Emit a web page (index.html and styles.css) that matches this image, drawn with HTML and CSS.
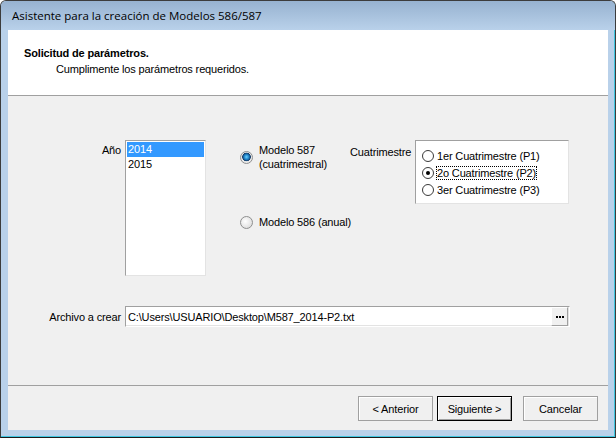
FILE: index.html
```html
<!DOCTYPE html>
<html lang="es">
<head>
    <meta charset="UTF-8">
    <title>Asistente para la creación de Modelos 586/587</title>
    <link rel="stylesheet" href="styles.css">
</head>
<body>

<div class="window">
    <div class="titlebar">Asistente para la creación de Modelos 586/587</div>

    <div class="frame">
        <div class="client">

            <div class="header">
                <div class="header-title">Solicitud de parámetros.</div>
                <div class="header-sub">Cumplimente los parámetros requeridos.</div>
            </div>

            <div class="content">
                <div class="params">
                    <div class="field-label year-label">Año</div>
                    <div class="listbox">
                        <div class="list-item selected">2014</div>
                        <div class="list-item">2015</div>
                    </div>

                    <div class="models">
                        <div class="aero-radio checked-row">
                            <span class="aero-dot checked"></span>
                            <span>Modelo 587<br>(cuatrimestral)</span>
                        </div>
                        <div class="aero-radio second">
                            <span class="aero-dot"></span>
                            <span>Modelo 586 (anual)</span>
                        </div>
                    </div>

                    <div class="period-label">Cuatrimestre</div>
                    <div class="groupbox">
                        <div class="classic-radio">
                            <span class="dot"></span>
                            <span>1er Cuatrimestre (P1)</span>
                        </div>
                        <div class="classic-radio">
                            <span class="dot checked"></span>
                            <span class="focused">2o Cuatrimestre (P2)</span>
                        </div>
                        <div class="classic-radio">
                            <span class="dot"></span>
                            <span>3er Cuatrimestre (P3)</span>
                        </div>
                    </div>
                </div>

                <div class="file-row">
                    <div class="field-label">Archivo a crear</div>
                    <div class="textbox">
                        <span class="path">C:\Users\USUARIO\Desktop\M587_2014-P2.txt</span>
                        <span class="browse"><i></i><i></i><i></i></span>
                    </div>
                </div>
            </div>

            <div class="footer">
                <button class="btn">&lt; Anterior</button>
                <button class="btn default">Siguiente &gt;</button>
                <button class="btn cancel">Cancelar</button>
            </div>

        </div>
    </div>
</div>

</body>
</html>
```

FILE: styles.css
```css
html, body {
    margin: 0;
    padding: 0;
    background: #ffffff;
}

body {
    font-family: "Liberation Sans", Arial, sans-serif;
    font-size: 11px;
    letter-spacing: -0.15px;
    color: #000;
}

.window {
    width: 616px;
    height: 438px;
    box-sizing: border-box;
    border: 1px solid #3c3c3c;
    border-bottom-color: #1a1a1a;
    border-radius: 6px 6px 0 0;
    background: #b9d1ea;
    display: flex;
    flex-direction: column;
    overflow: hidden;
    box-shadow: inset -1px -1px 0 #3fc6e0;
}

.titlebar {
    height: 29px;
    padding-left: 11px;
    line-height: 29px;
    font-family: "Open Sans", "Liberation Sans", sans-serif;
    font-size: 11.5px;
    letter-spacing: 0;
    color: #000;
    background: linear-gradient(#97b2d0, #b9d1ea);
    flex: none;
}

.frame {
    flex: 1;
    display: flex;
    padding: 0 7px 7px 7px;
}

.client {
    flex: 1;
    background: #f0f0f0;
    display: flex;
    flex-direction: column;
}

/* cabecera blanca */
.header {
    height: 66px;
    box-sizing: border-box;
    background: #fff;
    border-bottom: 1px solid #a0a0a0;
    padding: 15px 0 0 16px;
    line-height: 16px;
}

.header-title {
    font-weight: bold;
}

.header-sub {
    margin-left: 32px;
}

.content {
    flex: 1;
    padding-top: 44px;
}

.params {
    display: flex;
    align-items: flex-start;
}

.field-label {
    width: 117px;
    box-sizing: border-box;
    padding-right: 4px;
    text-align: right;
    flex: none;
}

.year-label {
    margin-top: 3px;
    line-height: 14px;
}

.listbox {
    width: 81px;
    height: 136px;
    box-sizing: border-box;
    background: #fff;
    border: 1px solid;
    border-color: #a0a0a0 #e3e3e3 #e3e3e3 #a0a0a0;
    padding: 1px;
    flex: none;
}

.list-item {
    height: 15px;
    line-height: 15px;
    padding-left: 1px;
}

.list-item.selected {
    background: #3399ff;
    color: #fff;
}

/* radios estilo Aero */
.models {
    width: 110px;
    margin-left: 34px;
    flex: none;
}

.aero-radio {
    display: flex;
    align-items: center;
    line-height: 14px;
    white-space: nowrap;
}

.aero-radio.checked-row {
    margin-top: 3px;
}

.aero-radio.second {
    margin-top: 44px;
}

.aero-dot {
    width: 13px;
    height: 13px;
    box-sizing: border-box;
    border-radius: 50%;
    border: 1px solid #8e8f8f;
    background: radial-gradient(circle at 40% 40%, #ffffff, #d4d4d4);
    margin-right: 6px;
    flex: none;
}

.aero-dot.checked {
    background: radial-gradient(circle at 50% 45%, #6ad2ff 0, #1d7fc4 2.5px, #153c68 4px, #e6e6e6 4.6px, #f4f4f4 100%);
}

.period-label {
    margin-top: 5px;
    line-height: 14px;
    width: 65px;
    flex: none;
}

.groupbox {
    width: 154px;
    height: 64px;
    box-sizing: border-box;
    background: #fff;
    border: 1px solid;
    border-color: #a0a0a0 #e3e3e3 #e3e3e3 #a0a0a0;
    padding: 6px 0 0 6px;
    flex: none;
}

.classic-radio {
    display: flex;
    align-items: center;
    height: 17px;
    white-space: nowrap;
}

.dot {
    width: 12px;
    height: 12px;
    box-sizing: border-box;
    border-radius: 50%;
    border: 1px solid #3a3a3a;
    background: #fff;
    margin-right: 3px;
    position: relative;
    flex: none;
}

.dot.checked::after {
    content: "";
    position: absolute;
    left: 3px;
    top: 3px;
    width: 4px;
    height: 4px;
    border-radius: 50%;
    background: #000;
}

.focused {
    outline: 1px dotted #000;
    outline-offset: 0;
    line-height: 12px;
}

/* fila del archivo */
.file-row {
    display: flex;
    align-items: center;
    margin-top: 30px;
}

.textbox {
    width: 445px;
    height: 21px;
    box-sizing: border-box;
    background: #fff;
    border: 1px solid;
    border-color: #a0a0a0 #fff #fff #a0a0a0;
    box-shadow: inset -1px -1px 0 #e3e3e3;
    display: flex;
    align-items: center;
    padding-left: 2px;
}

.path {
    flex: 1;
}

.browse {
    width: 17px;
    height: 19px;
    box-sizing: border-box;
    margin-right: 1px;
    background: #f0f0f0;
    border: 1px solid;
    border-color: #fff #a0a0a0 #a0a0a0 #fff;
    display: flex;
    justify-content: center;
    align-items: center;
    gap: 1px;
    padding-top: 1px;
}

.browse i {
    width: 2px;
    height: 2px;
    background: #000;
}

/* botones */
.footer {
    height: 45px;
    box-sizing: border-box;
    border-top: 1px solid #a0a0a0;
    display: flex;
    justify-content: flex-end;
    align-items: flex-start;
    padding: 10px 10px 0 0;
}

.btn {
    width: 75px;
    height: 25px;
    margin-left: 4px;
    font-family: "Liberation Sans", Arial, sans-serif;
    font-size: 11px;
    letter-spacing: -0.15px;
    color: #000;
    background: #f0f0f0;
    border: 1px solid #a0a0a0;
    box-shadow: inset 1px 1px 0 #fff;
    padding: 0;
}

.btn.default {
    border-color: #000;
    box-shadow: inset 1px 1px 0 #fff, inset -1px -1px 0 #a0a0a0;
}

.btn.cancel {
    margin-left: 11px;
}
```
